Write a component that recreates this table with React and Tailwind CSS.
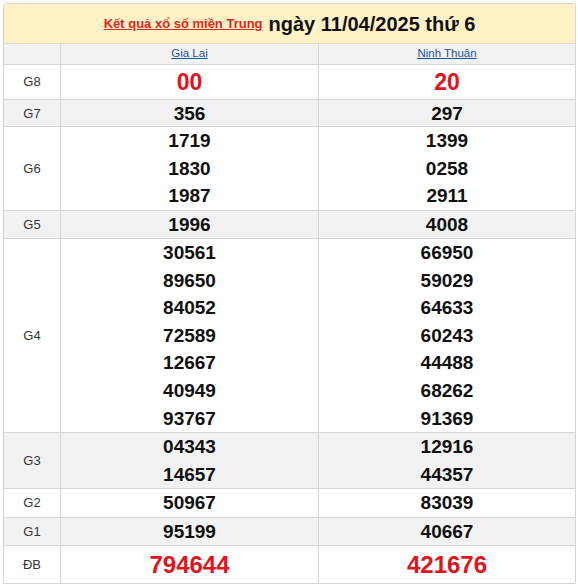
import React from "react";

const rows = [
  { label: "G8", h: "h-[35px]", a: ["00"], b: ["20"], big: "g8", gray: false },
  { label: "G7", h: "h-[27px]", a: ["356"], b: ["297"], gray: true },
  { label: "G6", h: "h-[84px]", a: ["1719", "1830", "1987"], b: ["1399", "0258", "2911"], gray: false },
  { label: "G5", h: "h-[28px]", a: ["1996"], b: ["4008"], gray: true },
  {
    label: "G4",
    h: "h-[194px]",
    a: ["30561", "89650", "84052", "72589", "12667", "40949", "93767"],
    b: ["66950", "59029", "64633", "60243", "44488", "68262", "91369"],
    gray: false,
  },
  { label: "G3", h: "h-[56px]", a: ["04343", "14657"], b: ["12916", "44357"], gray: true },
  { label: "G2", h: "h-[29px]", a: ["50967"], b: ["83039"], gray: false },
  { label: "G1", h: "h-[28px]", a: ["95199"], b: ["40667"], gray: true },
  { label: "ĐB", h: "h-[37px]", a: ["794644"], b: ["421676"], big: "db", gray: false },
];

function Cell({ nums, big, last }) {
  const cls =
    big === "db"
      ? "text-[24px] leading-[27px] font-bold text-[#e3131e]"
      : big === "g8"
      ? "text-[23px] leading-[27px] font-bold text-[#e3131e]"
      : "text-[19px] leading-[27.6px] font-bold text-[#111]";
  return (
    <div
      className={`flex flex-col items-center justify-center ${last ? "" : "border-r border-[#d6d6d6]"}`}
    >
      {nums.map((n) => (
        <div key={n} className={cls}>
          {n}
        </div>
      ))}
    </div>
  );
}

export default function App() {
  return (
    <div
      className="bg-white w-[578px] h-[587px] pt-[3px] pl-[3px]"
      style={{ fontFamily: '"Liberation Sans", Arial, sans-serif' }}
    >
      <div className="w-[573px] border border-[#d6d6d6] rounded-t-[3px]">
        <div className="h-[40px] bg-[#fff2c6] flex items-center justify-center gap-[6px] border-b border-[#e2dccb]">
          <span className="text-[13px] font-bold text-[#e0261e] underline">
            Kết quả xổ số miền Trung
          </span>
          <span className="text-[20px] font-bold text-[#111]">ngày 11/04/2025 thứ 6</span>
        </div>
        <div className="grid grid-cols-[57px_258px_1fr] h-[21px] bg-[#f2f2f2] border-b border-[#d6d6d6]">
          <div className="border-r border-[#d6d6d6]" />
          <div className="border-r border-[#d6d6d6] flex items-center justify-center">
            <span className="text-[11.5px] text-[#1d4f9c] underline">Gia Lai</span>
          </div>
          <div className="flex items-center justify-center">
            <span className="text-[11.5px] text-[#1d4f9c] underline">Ninh Thuận</span>
          </div>
        </div>
        {rows.map((r, i) => (
          <div
            key={r.label}
            className={`grid grid-cols-[57px_258px_1fr] ${r.h} ${r.gray ? "bg-[#f2f2f2]" : "bg-white"} ${
              i < rows.length - 1 ? "border-b border-[#d6d6d6]" : ""
            }`}
          >
            <div className="border-r border-[#d6d6d6] flex items-center justify-center text-[13px] text-[#333]">
              {r.label}
            </div>
            <Cell nums={r.a} big={r.big} />
            <Cell nums={r.b} big={r.big} last />
          </div>
        ))}
      </div>
    </div>
  );
}
